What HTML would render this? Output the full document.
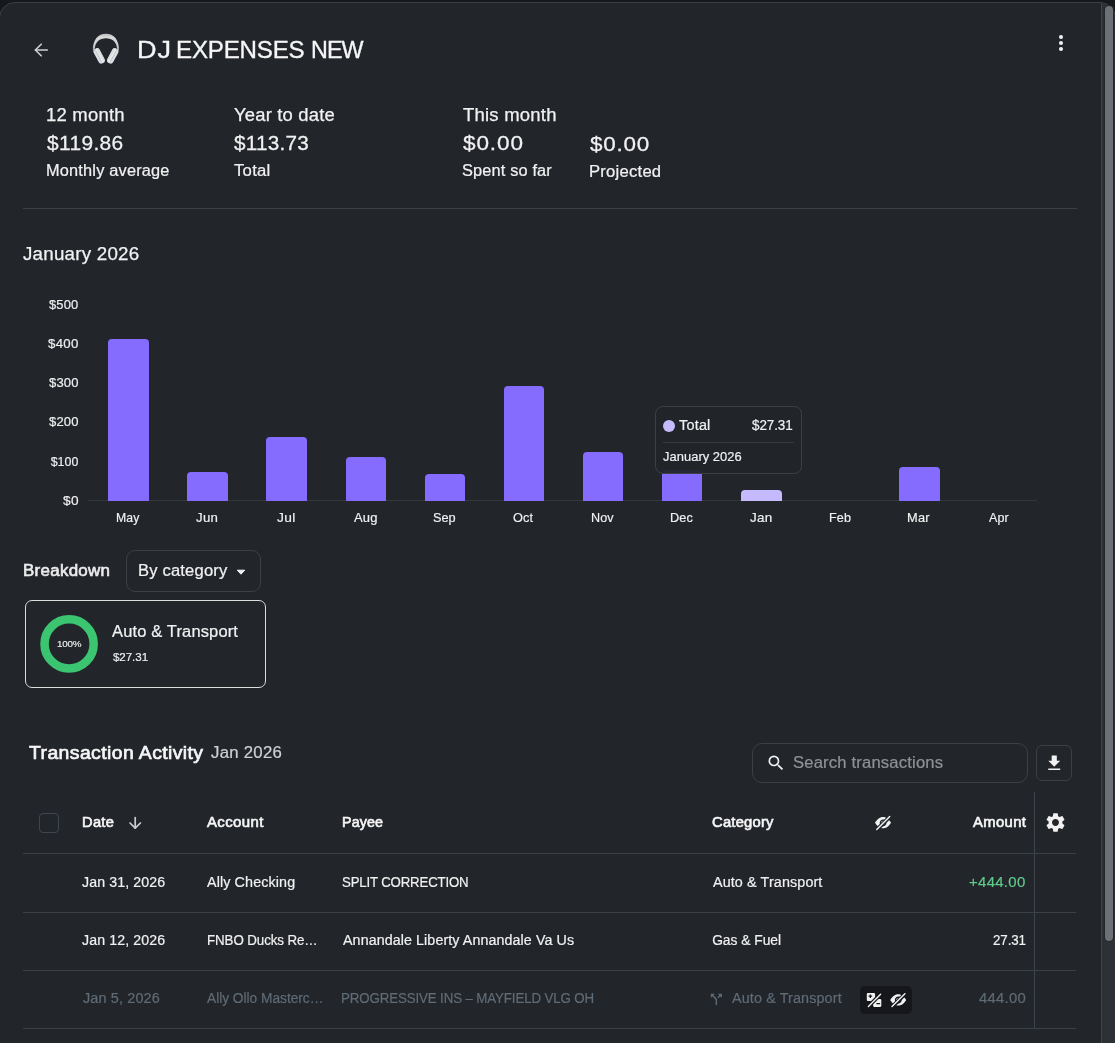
<!DOCTYPE html>
<html>
<head>
<meta charset="utf-8">
<title>DJ EXPENSES NEW</title>
<style>
*{box-sizing:border-box;margin:0;padding:0}
html,body{width:1115px;height:1043px;overflow:hidden;background:#22252a}
body{font-family:"Liberation Sans",sans-serif;color:#f1f1f2;position:relative}
.abs{position:absolute;white-space:nowrap;line-height:1}
.hl{position:absolute;height:1px;background:#3b4045}
.vl{position:absolute;width:1px;background:#3b4045}
.bar{position:absolute;width:40.6px;background:#856cff;border-radius:4px 4px 0 0}
svg{position:absolute;overflow:visible}
</style>
</head>
<body>
<div class="abs" style="left:0;top:0;width:1115px;height:20px;background:#16181c"></div>
<div class="abs" style="left:-1px;top:2px;width:1117px;height:1060px;background:#22252a;border:1px solid #3c4045;border-radius:16px 16px 0 0;overflow:hidden"><div class="abs" style="right:0;top:0;width:14px;height:100%;background:#2d3035;border-left:1px solid #40444a"></div></div>
<div class="abs" style="left:1104px;top:5px;width:10px;height:937px;background:#23262a;border-radius:5px"></div><div class="abs" style="left:1105px;top:6px;width:8px;height:935px;background:#6d7175;border-radius:4px"></div>
<svg style="left:0;top:0" width="60" height="70"><g fill="none" stroke="#cdd1d4" stroke-width="1.6" stroke-linecap="round" stroke-linejoin="round"><path d="M47.3 50H35.4"/><path d="M41.2 44.2L35.4 50l5.8 5.8"/></g></svg>
<svg style="left:86px;top:28px" width="40" height="40" viewBox="0 0 40 40">
<defs><linearGradient id="hb" x1="0" y1="0" x2="0" y2="1"><stop offset="0" stop-color="#bcbcbc"/><stop offset="0.22" stop-color="#dadada"/><stop offset="0.8" stop-color="#cacaca"/><stop offset="1" stop-color="#858585"/></linearGradient>
<linearGradient id="hc" x1="0" y1="0" x2="1" y2="0"><stop offset="0" stop-color="#b4b4b4"/><stop offset="0.3" stop-color="#ececec"/><stop offset="1" stop-color="#d2d2d2"/></linearGradient></defs>
<path d="M6.8 22.6 C6.8 11.6 12 5.75 19.95 5.75 S33.1 11.6 33.1 22.6 L31.2 22.6 C31.2 13.6 26 10.3 19.95 10.3 S8.7 13.6 8.7 22.6Z" fill="url(#hb)"/>
<g transform="translate(13.15 27.95) rotate(-28)"><rect x="-3.3" y="-8.1" width="6.6" height="16.2" rx="2.9" fill="#d9e0e8"/><rect x="-0.9" y="-8.1" width="4.2" height="15.3" rx="2.1" fill="url(#hc)"/></g>
<g transform="translate(26.75 27.95) rotate(28) scale(-1 1)"><rect x="-3.3" y="-8.1" width="6.6" height="16.2" rx="2.9" fill="#d9e0e8"/><rect x="-0.9" y="-8.1" width="4.2" height="15.3" rx="2.1" fill="url(#hc)"/></g>
</svg>
<svg style="left:1049px;top:31px" width="24" height="24" viewBox="0 0 24 24"><circle cx="12" cy="6" r="2.05" fill="#f1f1f2"/><circle cx="12" cy="12" r="2.05" fill="#f1f1f2"/><circle cx="12" cy="18" r="2.05" fill="#f1f1f2"/></svg>
<div class="hl" style="left:23px;top:208px;width:1054px"></div>
<div class="hl" style="left:88px;top:499.5px;width:949px;background:#33373c"></div>
<div class="bar" style="left:108.2px;top:339.3px;height:161.5px;background:#856cff"></div>
<div class="bar" style="left:187.3px;top:472px;height:28.8px;background:#856cff"></div>
<div class="bar" style="left:266.4px;top:437.1px;height:63.7px;background:#856cff"></div>
<div class="bar" style="left:345.5px;top:456.8px;height:44.0px;background:#856cff"></div>
<div class="bar" style="left:424.6px;top:473.7px;height:27.1px;background:#856cff"></div>
<div class="bar" style="left:503.7px;top:386.1px;height:114.7px;background:#856cff"></div>
<div class="bar" style="left:582.8px;top:451.8px;height:49.0px;background:#856cff"></div>
<div class="bar" style="left:661.9px;top:469.6px;height:31.2px;background:#856cff"></div>
<div class="bar" style="left:741.0px;top:490.2px;height:10.6px;background:#c6baff"></div>
<div class="bar" style="left:899.2px;top:466.9px;height:33.9px;background:#856cff"></div>
<div class="abs" style="left:655px;top:406px;width:147px;height:68px;background:rgba(34,37,42,0.95);border:1px solid #3c4045;border-radius:8px"></div>
<div class="abs" style="left:663.1px;top:419.7px;width:12.2px;height:12.2px;border-radius:50%;background:#c6baff"></div>
<div class="hl" style="left:663px;top:442px;width:131px;background:#383c41"></div>
<div class="abs" style="left:126px;top:550px;width:135px;height:41.5px;border:1px solid #3c4045;border-radius:9px"></div>
<svg style="left:229.2px;top:559.5px" width="24" height="24" viewBox="0 0 24 24"><path d="M8.2 10.2h7.6L12 14.2z" fill="#f1f1f2" stroke="#f1f1f2" stroke-width="1" stroke-linejoin="round"/></svg>
<div class="abs" style="left:25px;top:600px;width:241px;height:88px;border:1px solid #dcdcdd;border-radius:7px"></div>
<svg style="left:39px;top:614px" width="60" height="60" viewBox="0 0 60 60"><circle cx="30.1" cy="29.9" r="24.57" fill="none" stroke="#3cc571" stroke-width="8.55"/></svg>
<div class="abs" style="left:752px;top:743px;width:276px;height:40px;border:1px solid #3c4045;border-radius:10px"></div>
<svg style="left:766.1px;top:753.3px" width="20" height="20" viewBox="0 0 24 24"><path d="M15.5 14h-.79l-.28-.27A6.471 6.471 0 0 0 16 9.5 6.5 6.5 0 1 0 9.5 16c1.61 0 3.09-.59 4.23-1.57l.27.28v.79l5 4.99L20.49 19l-4.990-5zm-6 0C7.010 14 5 11.990 5 9.500S7.010 5 9.500 5 14 7.010 14 9.500 11.990 14 9.500 14z" fill="#f1f1f2"/></svg>
<div class="abs" style="left:1036px;top:745px;width:36px;height:36px;border:1px solid #3c4045;border-radius:6px"></div>
<svg style="left:1043.7px;top:753.3px" width="20.5" height="20.5" viewBox="0 0 24 24"><path d="M19 9h-4V3H9v6H5l7 7 7-7zM5 18v2h14v-2H5z" fill="#f1f1f2"/></svg>
<div class="abs" style="left:39px;top:813px;width:20px;height:20px;border:1px solid #40474c;border-radius:4px"></div>
<svg style="left:0;top:0" width="200" height="840"><g fill="none" stroke="#c8cdd1" stroke-width="1.7" stroke-linecap="round" stroke-linejoin="round"><path d="M135.2 817.6V828"/><path d="M130 823l5.2 5.2 5.2-5.2"/></g></svg>
<svg style="left:1044.45px;top:811.4px" width="23" height="23" viewBox="0 0 24 24"><path d="M19.140 12.940c.040-.300.060-.610.060-.940 0-.320-.020-.640-.070-.940l2.030-1.580c.180-.140.230-.410.120-.610l-1.920-3.320c-.120-.220-.370-.290-.590-.220l-2.390.960c-.500-.380-1.030-.700-1.620-.940l-.360-2.540c-.040-.240-.240-.410-.480-.410h-3.840c-.240 0-.430.170-.470.410l-.360 2.540c-.590.240-1.130.570-1.620.940l-2.390-.960c-.220-.080-.470 0-.590.220L2.740 8.870c-.120.210-.080.470.120.610l2.030 1.580c-.050.300-.090.630-.090.940s.020.640.070.940l-2.030 1.580c-.180.140-.230.410-.120.610l1.920 3.320c.120.220.370.290.590.220l2.390-.960c.500.380 1.030.700 1.620.940l.360 2.540c.050.240.240.410.480.410h3.840c.240 0 .440-.170.470-.410l.360-2.540c.590-.240 1.130-.560 1.620-.940l2.390.960c.220.080.470 0 .590-.220l1.920-3.320c.120-.220.070-.470-.120-.610l-2.010-1.580zM12 15.600c-1.980 0-3.600-1.620-3.600-3.600s1.620-3.600 3.600-3.600 3.600 1.620 3.600 3.600-1.620 3.600-3.600 3.600z" fill="#f1f1f2"/></svg>
<div class="vl" style="left:1034px;top:792px;height:237px;background:#3f454a"></div>
<div class="hl" style="left:23px;top:853px;width:1053px"></div>
<div class="hl" style="left:23px;top:912px;width:1053px"></div>
<div class="hl" style="left:23px;top:970px;width:1053px"></div>
<div class="hl" style="left:23px;top:1028px;width:1053px"></div>
<svg style="left:707.6px;top:990.6px" width="16.7" height="16.7" viewBox="0 0 24 24"><path d="M14 4l2.290 2.290-2.880 2.880 1.420 1.420 2.880-2.880L20 10V4h-6zm-4 0H4v6l2.290-2.290 4.710 4.700V20h2v-8.410l-5.290-5.300L10 4z" fill="#5f6b75"/></svg>
<div class="abs" style="left:860px;top:986px;width:52px;height:28px;background:#15171a;border-radius:5px"></div>
<svg style="left:0;top:0" width="1115" height="1043" viewBox="0 0 1115 1043"><g transform="translate(883 822.7)"><path d="M-8 0C-5.2 -4.3 -2.6 -5.6 0 -5.6C2.6 -5.6 5.2 -4.3 8 0C5.2 4.3 2.6 5.6 0 5.6C-2.6 5.6 -5.2 4.3 -8 0Z" fill="#f1f1f2"/><circle cx="0.1" cy="0.1" r="2.75" fill="none" stroke="#22252a" stroke-width="1.3"/><path d="M-6.6 7.4L7.4 -6.6" stroke="#22252a" stroke-width="4" /><path d="M-6.2 6.7L6.7 -6.2" stroke="#f1f1f2" stroke-width="1.45" stroke-linecap="round"/></g><g transform="translate(898.2 999.9)"><path d="M-8 0C-5.2 -4.3 -2.6 -5.6 0 -5.6C2.6 -5.6 5.2 -4.3 8 0C5.2 4.3 2.6 5.6 0 5.6C-2.6 5.6 -5.2 4.3 -8 0Z" fill="#f1f1f2"/><circle cx="0.1" cy="0.1" r="2.75" fill="none" stroke="#15171a" stroke-width="1.3"/><path d="M-6.6 7.4L7.4 -6.6" stroke="#15171a" stroke-width="4" /><path d="M-6.2 6.7L6.7 -6.2" stroke="#f1f1f2" stroke-width="1.45" stroke-linecap="round"/></g><g><rect x="866.8" y="992.9" width="8.3" height="8.1" rx="1.1" fill="#f1f1f2"/><rect x="873.1" y="998.9" width="8.2" height="8" rx="1.1" fill="#f1f1f2"/><path d="M866.9 1007.9L882 992.9" stroke="#15171a" stroke-width="3.7"/><path d="M868.4 1006.4L880.6 994.3" stroke="#f1f1f2" stroke-width="1.4" stroke-linecap="round"/><path d="M868.6 996.2h3.5M870.35 994.5v3.5M876.4 1003.6h3.7" stroke="#15171a" stroke-width="1.2"/></g></svg>
<div style="position:absolute;left:0;top:0;width:1115px;height:1043px;will-change:transform"><div class="abs" id="title" style="left:136.88px;top:38.00px;font-size:24.6px;color:#f6f6f7;letter-spacing:0.826px;transform:scaleX(1.1);transform-origin:0 0;-webkit-text-stroke:0.34px #f6f6f7">DJ</div>
<div class="abs" id="title2" style="left:176.04px;top:38.00px;font-size:24.6px;color:#f6f6f7;letter-spacing:-0.200px;transform:scaleX(0.981);transform-origin:0 0;-webkit-text-stroke:0.34px #f6f6f7">EXPENSES</div>
<div class="abs" id="title3" style="left:311.21px;top:38.00px;font-size:24.6px;color:#f6f6f7;letter-spacing:-0.949px;transform:scaleX(0.948);transform-origin:0 0;-webkit-text-stroke:0.34px #f6f6f7">NEW</div>
<div class="abs" id="s1a" style="left:46.27px;top:107.00px;font-size:17.6px;color:#f1f1f2;letter-spacing:0.212px;transform:scaleX(1.051);transform-origin:0 0;-webkit-text-stroke:0.25px #f1f1f2">12 month</div>
<div class="abs" id="s1b" style="left:47.27px;top:134.00px;font-size:19.6px;color:#f1f1f2;letter-spacing:0.348px;transform:scaleX(1.066);transform-origin:0 0;-webkit-text-stroke:0.27px #f1f1f2">$119.86</div>
<div class="abs" id="s1c" style="left:46.40px;top:163.00px;font-size:15.6px;color:#f1f1f2;letter-spacing:0.179px;transform:scaleX(1.048);transform-origin:0 0;-webkit-text-stroke:0.22px #f1f1f2">Monthly average</div>
<div class="abs" id="s2a" style="left:234.33px;top:107.00px;font-size:17.6px;color:#f1f1f2;letter-spacing:0.184px;transform:scaleX(1.047);transform-origin:0 0;-webkit-text-stroke:0.25px #f1f1f2">Year to date</div>
<div class="abs" id="s2b" style="left:233.98px;top:134.00px;font-size:19.6px;color:#f1f1f2;letter-spacing:0.237px;transform:scaleX(1.055);transform-origin:0 0;-webkit-text-stroke:0.27px #f1f1f2">$113.73</div>
<div class="abs" id="s2c" style="left:234.25px;top:163.00px;font-size:15.6px;color:#f1f1f2;letter-spacing:0.237px;transform:scaleX(1.071);transform-origin:0 0;-webkit-text-stroke:0.22px #f1f1f2">Total</div>
<div class="abs" id="s3a" style="left:463.00px;top:107.00px;font-size:17.6px;color:#f1f1f2;letter-spacing:0.209px;transform:scaleX(1.052);transform-origin:0 0;-webkit-text-stroke:0.25px #f1f1f2">This month</div>
<div class="abs" id="s3b" style="left:462.98px;top:134.00px;font-size:19.6px;color:#f1f1f2;letter-spacing:0.773px;transform:scaleX(1.15);transform-origin:0 0;-webkit-text-stroke:0.27px #f1f1f2">$0.00</div>
<div class="abs" id="s3c" style="left:462.38px;top:163.00px;font-size:15.6px;color:#f1f1f2;letter-spacing:0.142px;transform:scaleX(1.048);transform-origin:0 0;-webkit-text-stroke:0.22px #f1f1f2">Spent so far</div>
<div class="abs" id="s4b" style="left:589.63px;top:135.00px;font-size:19.6px;color:#f1f1f2;letter-spacing:0.684px;transform:scaleX(1.146);transform-origin:0 0;-webkit-text-stroke:0.27px #f1f1f2">$0.00</div>
<div class="abs" id="s4c" style="left:588.75px;top:164.00px;font-size:15.6px;color:#f1f1f2;letter-spacing:0.214px;transform:scaleX(1.067);transform-origin:0 0;-webkit-text-stroke:0.22px #f1f1f2">Projected</div>
<div class="abs" id="ctitle" style="left:23.40px;top:246.00px;font-size:17.6px;color:#f1f1f2;letter-spacing:0.222px;transform:scaleX(1.065);transform-origin:0 0;-webkit-text-stroke:0.25px #f1f1f2">January 2026</div>
<div class="abs" id="y0" style="left:62.78px;top:495.00px;font-size:12.4px;color:#f1f1f2;letter-spacing:0.262px;transform:scaleX(1.103);transform-origin:0 0;-webkit-text-stroke:0.17px #f1f1f2">$0</div>
<div class="abs" id="y1" style="left:50.71px;top:456.00px;font-size:12.4px;color:#f1f1f2;letter-spacing:0.007px;-webkit-text-stroke:0.17px #f1f1f2">$100</div>
<div class="abs" id="y2" style="left:48.55px;top:416.00px;font-size:12.4px;color:#f1f1f2;letter-spacing:0.146px;transform:scaleX(1.053);transform-origin:0 0;-webkit-text-stroke:0.17px #f1f1f2">$200</div>
<div class="abs" id="y3" style="left:48.55px;top:377.00px;font-size:12.4px;color:#f1f1f2;letter-spacing:0.146px;transform:scaleX(1.053);transform-origin:0 0;-webkit-text-stroke:0.17px #f1f1f2">$300</div>
<div class="abs" id="y4" style="left:47.79px;top:338.00px;font-size:12.4px;color:#f1f1f2;letter-spacing:0.270px;transform:scaleX(1.072);transform-origin:0 0;-webkit-text-stroke:0.17px #f1f1f2">$400</div>
<div class="abs" id="y5" style="left:49.19px;top:299.00px;font-size:12.4px;color:#f1f1f2;letter-spacing:0.155px;transform:scaleX(1.044);transform-origin:0 0;-webkit-text-stroke:0.17px #f1f1f2">$500</div>
<div class="abs" id="x0" style="left:116.44px;top:512.00px;font-size:12.4px;color:#f1f1f2;letter-spacing:0.111px;transform:scaleX(0.985);transform-origin:0 0;-webkit-text-stroke:0.17px #f1f1f2">May</div>
<div class="abs" id="x1" style="left:195.96px;top:512.00px;font-size:12.4px;color:#f1f1f2;letter-spacing:0.298px;transform:scaleX(1.067);transform-origin:0 0;-webkit-text-stroke:0.17px #f1f1f2">Jun</div>
<div class="abs" id="x2" style="left:277.12px;top:512.00px;font-size:12.4px;color:#f1f1f2;letter-spacing:0.350px;transform:scaleX(1.11);transform-origin:0 0;-webkit-text-stroke:0.17px #f1f1f2">Jul</div>
<div class="abs" id="x3" style="left:354.09px;top:512.00px;font-size:12.4px;color:#f1f1f2;letter-spacing:0.180px;transform:scaleX(1.048);transform-origin:0 0;-webkit-text-stroke:0.17px #f1f1f2">Aug</div>
<div class="abs" id="x4" style="left:433.39px;top:512.00px;font-size:12.4px;color:#f1f1f2;letter-spacing:-0.001px;transform:scaleX(1.028);transform-origin:0 0;-webkit-text-stroke:0.17px #f1f1f2">Sep</div>
<div class="abs" id="x5" style="left:513.10px;top:512.00px;font-size:12.4px;color:#f1f1f2;letter-spacing:0.129px;transform:scaleX(1.029);transform-origin:0 0;-webkit-text-stroke:0.17px #f1f1f2">Oct</div>
<div class="abs" id="x6" style="left:591.23px;top:512.00px;font-size:12.4px;color:#f1f1f2;letter-spacing:0.036px;transform:scaleX(1.016);transform-origin:0 0;-webkit-text-stroke:0.17px #f1f1f2">Nov</div>
<div class="abs" id="x7" style="left:670.27px;top:512.00px;font-size:12.4px;color:#f1f1f2;letter-spacing:0.071px;transform:scaleX(1.025);transform-origin:0 0;-webkit-text-stroke:0.17px #f1f1f2">Dec</div>
<div class="abs" id="x8" style="left:750.46px;top:512.00px;font-size:12.4px;color:#f1f1f2;letter-spacing:0.310px;transform:scaleX(1.085);transform-origin:0 0;-webkit-text-stroke:0.17px #f1f1f2">Jan</div>
<div class="abs" id="x9" style="left:828.82px;top:512.00px;font-size:12.4px;color:#f1f1f2;letter-spacing:0.124px;transform:scaleX(1.014);transform-origin:0 0;-webkit-text-stroke:0.17px #f1f1f2">Feb</div>
<div class="abs" id="x10" style="left:907.24px;top:512.00px;font-size:12.4px;color:#f1f1f2;letter-spacing:0.279px;transform:scaleX(1.033);transform-origin:0 0;-webkit-text-stroke:0.17px #f1f1f2">Mar</div>
<div class="abs" id="x11" style="left:988.65px;top:512.00px;font-size:12.4px;color:#f1f1f2;letter-spacing:0.124px;transform:scaleX(1.009);transform-origin:0 0;-webkit-text-stroke:0.17px #f1f1f2">Apr</div>
<div class="abs" id="tt1" style="left:678.52px;top:419.00px;font-size:13.8px;color:#f1f1f2;letter-spacing:0.206px;transform:scaleX(1.045);transform-origin:0 0;-webkit-text-stroke:0.19px #f1f1f2">Total</div>
<div class="abs" id="tt2" style="left:752.14px;top:419.00px;font-size:13.8px;color:#f1f1f2;letter-spacing:-0.088px;transform:scaleX(0.976);transform-origin:0 0;-webkit-text-stroke:0.19px #f1f1f2">$27.31</div>
<div class="abs" id="tt3" style="left:663.00px;top:451.00px;font-size:12.6px;color:#f1f1f2;letter-spacing:0.041px;transform:scaleX(1.025);transform-origin:0 0;-webkit-text-stroke:0.18px #f1f1f2">January 2026</div>
<div class="abs" id="bd" style="left:22.62px;top:563.00px;font-size:15.8px;color:#ececed;letter-spacing:0.269px;transform:scaleX(1.071);transform-origin:0 0;-webkit-text-stroke:0.6px #ececed">Breakdown</div>
<div class="abs" id="bycat" style="left:137.92px;top:563.00px;font-size:15.8px;color:#f1f1f2;letter-spacing:0.170px;transform:scaleX(1.049);transform-origin:0 0;-webkit-text-stroke:0.22px #f1f1f2">By category</div>
<div class="abs" id="pct" style="left:56.67px;top:639.00px;font-size:9.8px;color:#f1f1f2;letter-spacing:-0.189px;transform:scaleX(1.003);transform-origin:0 0;-webkit-text-stroke:0.14px #f1f1f2">100%</div>
<div class="abs" id="cat" style="left:112.19px;top:624.00px;font-size:15.8px;color:#f1f1f2;letter-spacing:0.147px;transform:scaleX(1.043);transform-origin:0 0;-webkit-text-stroke:0.22px #f1f1f2">Auto &amp; Transport</div>
<div class="abs" id="catv" style="left:112.50px;top:652.00px;font-size:11.8px;color:#f1f1f2;letter-spacing:-0.071px;transform:scaleX(0.982);transform-origin:0 0;-webkit-text-stroke:0.17px #f1f1f2">$27.31</div>
<div class="abs" id="txa" style="left:28.74px;top:745.00px;font-size:17.6px;color:#f6f6f7;letter-spacing:0.356px;transform:scaleX(1.104);transform-origin:0 0;-webkit-text-stroke:0.65px #f6f6f7">Transaction Activity</div>
<div class="abs" id="txd" style="left:211.07px;top:745.00px;font-size:15.6px;color:#cfd0d2;letter-spacing:0.245px;transform:scaleX(1.076);transform-origin:0 0;-webkit-text-stroke:0.22px #cfd0d2">Jan 2026</div>
<div class="abs" id="ph" style="left:793.41px;top:755.00px;font-size:15.8px;color:#8e9296;letter-spacing:0.162px;transform:scaleX(1.053);transform-origin:0 0;-webkit-text-stroke:0.22px #8e9296">Search transactions</div>
<div class="abs" id="h1" style="left:81.55px;top:816.00px;font-size:13.8px;color:#f6f6f7;letter-spacing:0.302px;transform:scaleX(1.062);transform-origin:0 0;-webkit-text-stroke:0.6px #f6f6f7">Date</div>
<div class="abs" id="h2" style="left:206.92px;top:816.00px;font-size:13.8px;color:#f6f6f7;letter-spacing:0.343px;transform:scaleX(1.085);transform-origin:0 0;-webkit-text-stroke:0.6px #f6f6f7">Account</div>
<div class="abs" id="h3" style="left:341.56px;top:816.00px;font-size:13.8px;color:#f6f6f7;letter-spacing:0.095px;transform:scaleX(1.037);transform-origin:0 0;-webkit-text-stroke:0.6px #f6f6f7">Payee</div>
<div class="abs" id="h4" style="left:712.15px;top:816.00px;font-size:13.8px;color:#f6f6f7;letter-spacing:0.216px;transform:scaleX(1.069);transform-origin:0 0;-webkit-text-stroke:0.6px #f6f6f7">Category</div>
<div class="abs" id="h5" style="left:973.26px;top:816.00px;font-size:13.8px;color:#f6f6f7;letter-spacing:0.362px;transform:scaleX(1.073);transform-origin:0 0;-webkit-text-stroke:0.6px #f6f6f7">Amount</div>
<div class="abs" id="r1a" style="left:82.26px;top:876.00px;font-size:13.8px;color:#f1f1f2;letter-spacing:0.099px;transform:scaleX(1.027);transform-origin:0 0;-webkit-text-stroke:0.19px #f1f1f2">Jan 31, 2026</div>
<div class="abs" id="r1b" style="left:207.24px;top:876.00px;font-size:13.8px;color:#f1f1f2;letter-spacing:0.107px;transform:scaleX(1.038);transform-origin:0 0;-webkit-text-stroke:0.19px #f1f1f2">Ally Checking</div>
<div class="abs" id="r1c" style="left:341.90px;top:876.00px;font-size:13.8px;color:#f1f1f2;letter-spacing:-0.167px;transform:scaleX(0.958);transform-origin:0 0;-webkit-text-stroke:0.19px #f1f1f2">SPLIT CORRECTION</div>
<div class="abs" id="r1d" style="left:712.59px;top:876.00px;font-size:13.8px;color:#f1f1f2;letter-spacing:0.108px;transform:scaleX(1.04);transform-origin:0 0;-webkit-text-stroke:0.19px #f1f1f2">Auto &amp; Transport</div>
<div class="abs" id="r1e" style="left:969.46px;top:876.00px;font-size:13.8px;color:#60c98c;letter-spacing:0.273px;transform:scaleX(1.084);transform-origin:0 0;-webkit-text-stroke:0.19px #60c98c">+444.00</div>
<div class="abs" id="r2a" style="left:82.26px;top:934.00px;font-size:13.8px;color:#f1f1f2;letter-spacing:0.099px;transform:scaleX(1.027);transform-origin:0 0;-webkit-text-stroke:0.19px #f1f1f2">Jan 12, 2026</div>
<div class="abs" id="r2b" style="left:206.56px;top:934.00px;font-size:13.8px;color:#f1f1f2;letter-spacing:-0.100px;transform:scaleX(0.967);transform-origin:0 0;-webkit-text-stroke:0.19px #f1f1f2">FNBO Ducks Re…</div>
<div class="abs" id="r2c" style="left:342.71px;top:934.00px;font-size:13.8px;color:#f1f1f2;letter-spacing:0.094px;transform:scaleX(1.033);transform-origin:0 0;-webkit-text-stroke:0.19px #f1f1f2">Annandale Liberty Annandale Va Us</div>
<div class="abs" id="r2d" style="left:712.14px;top:934.00px;font-size:13.8px;color:#f1f1f2;letter-spacing:-0.014px;-webkit-text-stroke:0.19px #f1f1f2">Gas &amp; Fuel</div>
<div class="abs" id="r2e" style="left:993.38px;top:934.00px;font-size:13.8px;color:#f1f1f2;letter-spacing:-0.134px;transform:scaleX(0.97);transform-origin:0 0;-webkit-text-stroke:0.19px #f1f1f2">27.31</div>
<div class="abs" id="r3a" style="left:82.60px;top:992.00px;font-size:13.8px;color:#5f6b75;letter-spacing:0.132px;transform:scaleX(1.046);transform-origin:0 0;-webkit-text-stroke:0.19px #5f6b75">Jan 5, 2026</div>
<div class="abs" id="r3b" style="left:206.71px;top:992.00px;font-size:13.8px;color:#5f6b75;letter-spacing:-0.010px;transform:scaleX(0.994);transform-origin:0 0;-webkit-text-stroke:0.19px #5f6b75">Ally Ollo Masterc…</div>
<div class="abs" id="r3c" style="left:341.21px;top:992.00px;font-size:13.8px;color:#5f6b75;letter-spacing:-0.132px;transform:scaleX(0.965);transform-origin:0 0;-webkit-text-stroke:0.19px #5f6b75">PROGRESSIVE INS – MAYFIELD VLG OH</div>
<div class="abs" id="r3d" style="left:732.27px;top:992.00px;font-size:13.8px;color:#5f6b75;letter-spacing:0.118px;transform:scaleX(1.041);transform-origin:0 0;-webkit-text-stroke:0.19px #5f6b75">Auto &amp; Transport</div>
<div class="abs" id="r3e" style="left:979.04px;top:992.00px;font-size:13.8px;color:#5f6b75;letter-spacing:0.236px;transform:scaleX(1.075);transform-origin:0 0;-webkit-text-stroke:0.19px #5f6b75">444.00</div></div>
</body>
</html>
